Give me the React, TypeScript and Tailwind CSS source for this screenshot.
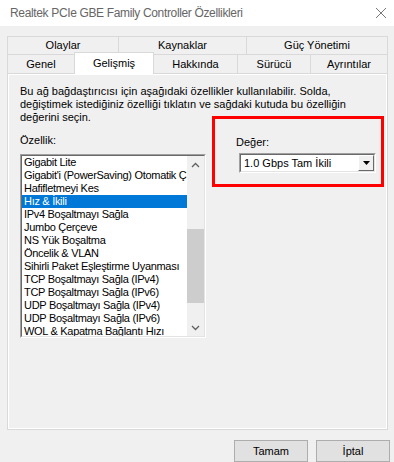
import React from "react";

const ITEMS = [
  "Gigabit Lite",
  "Gigabit'i (PowerSaving) Otomatik Ç",
  "Hafifletmeyi Kes",
  "Hız & İkili",
  "IPv4 Boşaltmayı Sağla",
  "Jumbo Çerçeve",
  "NS Yük Boşaltma",
  "Öncelik & VLAN",
  "Sihirli Paket Eşleştirme Uyanması",
  "TCP Boşaltmayı Sağla (IPv4)",
  "TCP Boşaltmayı Sağla (IPv6)",
  "UDP Boşaltmayı Sağla (IPv4)",
  "UDP Boşaltmayı Sağla (IPv6)",
  "WOL & Kapatma Bağlantı Hızı",
];

function Chevron({ up }: { up?: boolean }) {
  return (
    <svg width="9" height="6" viewBox="0 0 9 6" aria-hidden>
      <path
        d={up ? "M1 5 L4.5 1.5 L8 5" : "M1 1 L4.5 4.5 L8 1"}
        fill="none"
        stroke="#606060"
        strokeWidth="1.3"
      />
    </svg>
  );
}

function ListBox() {
  return (
    <div className="h-[184px] w-[186px] border-t border-l border-b border-r border-t-[#a0a0a0] border-l-[#a0a0a0] border-b-white border-r-white">
      <div className="flex h-full w-full border-t border-l border-b border-r border-t-[#696969] border-l-[#696969] border-b-[#e3e3e3] border-r-[#e3e3e3] bg-white">
        <div className="min-w-0 flex-1 overflow-hidden tracking-[-0.3px]">
          {ITEMS.map((t, i) => (
            <div
              key={t}
              className={
                i === 3
                  ? "h-[13px] whitespace-nowrap bg-[#0078d7] pl-[2px] leading-[13px] text-white"
                  : "h-[13px] whitespace-nowrap pl-[2px] leading-[13px] text-black"
              }
            >
              {t}
            </div>
          ))}
        </div>
        <div className="flex w-[17px] flex-col bg-[#f0f0f0]">
          <div className="flex h-[17px] items-center justify-center">
            <Chevron up />
          </div>
          <div className="h-[56px]" />
          <div className="h-[74px] bg-[#cdcdcd]" />
          <div className="flex-1" />
          <div className="flex h-[17px] items-center justify-center">
            <Chevron />
          </div>
        </div>
      </div>
    </div>
  );
}

function Combo() {
  return (
    <div className="ml-[3px] h-[20px] w-[137px] border-t border-l border-b border-r border-t-[#a0a0a0] border-l-[#a0a0a0] border-b-white border-r-white">
      <div className="flex h-full items-center border-t border-l border-b border-r border-t-[#696969] border-l-[#696969] border-b-[#e3e3e3] border-r-[#e3e3e3] bg-white">
        <span className="flex-1 whitespace-nowrap pl-[3px] leading-[13px]">1.0 Gbps Tam İkili</span>
        <div className="flex h-[16px] w-[16px] items-center justify-center border-t border-l border-b border-r border-t-white border-l-white border-b-[#696969] border-r-[#696969] bg-[#f0f0f0]">
          <svg width="7" height="4" viewBox="0 0 7 4" aria-hidden>
            <path d="M0 0 H7 L3.5 4 Z" fill="#000" />
          </svg>
        </div>
      </div>
    </div>
  );
}

export default function App() {
  return (
    <div className="flex h-[462px] w-[394px] flex-col bg-[#f0f0f0] font-['Liberation_Sans',Arial,sans-serif] text-[11px] text-black">
      <div className="flex h-[26px] items-center justify-between bg-white pl-[10px] pr-[6px]">
        <span className="text-[12px] tracking-[-0.35px] text-[#666]">
          Realtek PCIe GBE Family Controller Özellikleri
        </span>
        <svg width="12" height="12" viewBox="0 0 12 12" className="mr-[1px]" aria-hidden>
          <path d="M1 1 L11 11 M11 1 L1 11" stroke="#777" strokeWidth="1" />
        </svg>
      </div>

      <div className="px-[7px] pt-[10px]">
        <div className="flex h-[18px] w-[381px] border-t border-l border-r border-[#d9d9d9]">
          <div className="flex w-[111px] items-center justify-center border-r border-[#d9d9d9]">Olaylar</div>
          <div className="flex w-[128px] items-center justify-center border-r border-[#d9d9d9]">Kaynaklar</div>
          <div className="flex flex-1 items-center justify-center">Güç Yönetimi</div>
        </div>
        <div className="flex h-[19px] w-[381px]">
          <div className="flex w-[67px] items-center justify-center border-t border-l border-[#d9d9d9]">Genel</div>
          <div className="relative z-10 -mt-[2px] flex h-[22px] w-[80px] items-start justify-center self-start border-t border-l border-r border-[#d9d9d9] bg-white pt-[2px]">
            Gelişmiş
          </div>
          <div className="flex w-[83px] items-center justify-center border-t border-[#d9d9d9]">Hakkında</div>
          <div className="flex w-[73px] items-center justify-center border-t border-l border-[#d9d9d9]">Sürücü</div>
          <div className="flex flex-1 items-center justify-center border-t border-l border-r border-[#d9d9d9]">Ayrıntılar</div>
        </div>

        <div className="h-[357px] w-[381px] border border-[#d9d9d9] bg-white p-px">
          <div className="h-full bg-[#f0f0f0] pl-[11px] pt-[10px]">
            <p className="leading-[13px]">
              Bu ağ bağdaştırıcısı için aşağıdaki özellikler kullanılabilir. Solda,
              <br />
              değiştimek istediğiniz özelliği tıklatın ve sağdaki kutuda bu özelliğin
              <br />
              değerini seçin.
            </p>
            <div className="mt-[10px] flex items-start">
              <div className="flex flex-col">
                <span className="leading-[13px]">Özellik:</span>
                <div className="mt-[7px]">
                  <ListBox />
                </div>
              </div>
              <div className="relative ml-[30px] mt-[2px] flex flex-col">
                <span className="leading-[13px]">Değer:</span>
                <div className="mt-[4px]">
                  <Combo />
                </div>
                <div className="pointer-events-none absolute -left-[24px] -top-[20px] -right-[8px] -bottom-[14px] border-[3px] border-[#ff0000]" />
              </div>
            </div>
          </div>
        </div>
      </div>

      <div className="mt-[10px] flex justify-end gap-[8px] pr-[4px]">
        <button className="h-[22px] w-[74px] border border-[#adadad] bg-[#e1e1e1] text-[11px]">Tamam</button>
        <button className="h-[22px] w-[74px] border border-[#adadad] bg-[#e1e1e1] text-[11px]">İptal</button>
      </div>
    </div>
  );
}
